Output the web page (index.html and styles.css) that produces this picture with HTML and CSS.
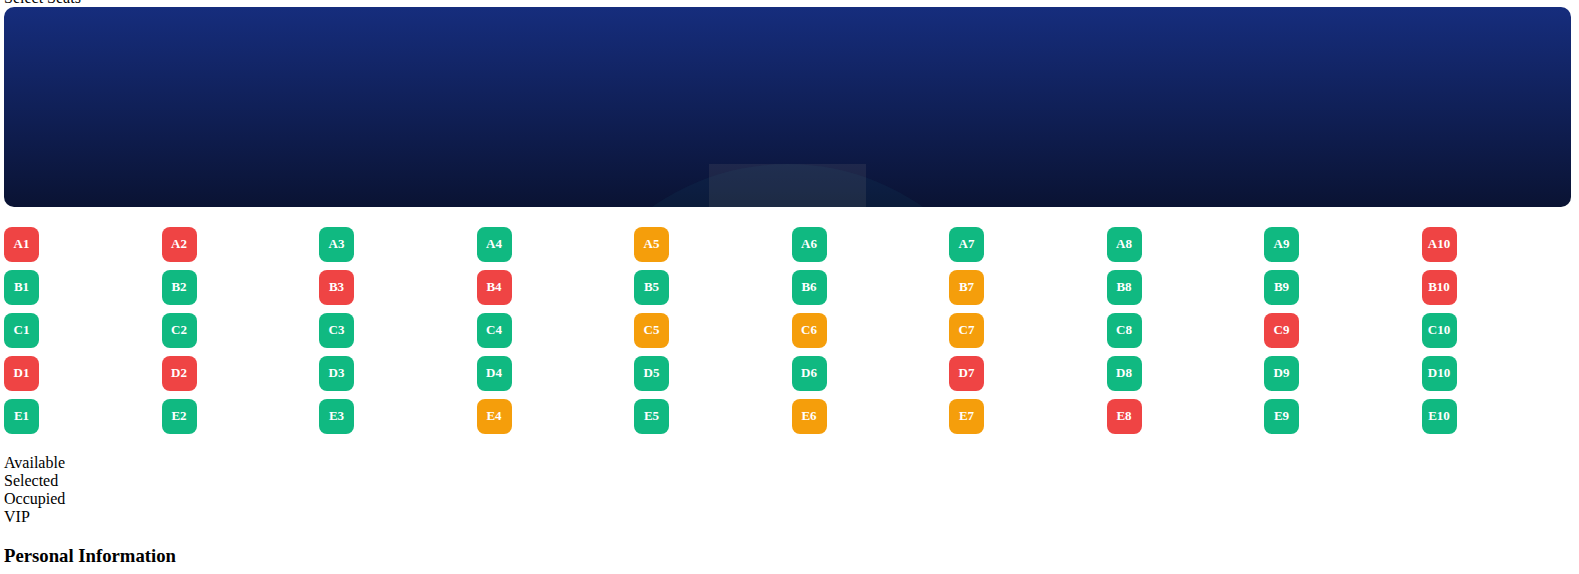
FILE: index.html
```html
<!DOCTYPE html>
<html lang="en">
<head>
<meta charset="utf-8">
<title>Select Seats</title>
<link rel="stylesheet" href="styles.css">
</head>
<body>
<main class="booking">
  <div class="step-title">Select Seats</div>
  <svg class="stage" viewBox="0 0 1567 200" preserveAspectRatio="xMidYMax slice" aria-hidden="true">
    <circle class="stage-glow" cx="783.5" cy="392" r="235"/>
    <rect class="stage-screen" x="705" y="157" width="157" height="43"/>
  </svg>
  <div class="seats" id="seats"></div>
  <ul class="legend">
    <li>Available</li>
    <li>Selected</li>
    <li>Occupied</li>
    <li>VIP</li>
  </ul>
  <h3 class="section-title">Personal Information</h3>
</main>
<script src="seats.js"></script>
</body>
</html>
```

FILE: styles.css
```css
body {
  margin: 0;
  overflow: hidden;
  background: #fff;
  color: #000;
  font-family: "Liberation Serif", "Times New Roman", serif;
  font-size: 16px;
  line-height: 18px;
}

.booking {
  margin: -11px 8px 0 4px;
}

.stage {
  display: block;
  width: 100%;
  height: 200px;
  margin-bottom: 20px;
  border-radius: 10px;
  background: linear-gradient(to bottom, #162d7d, #0a1333);
}

.stage-glow {
  fill: rgba(30, 110, 130, 0.1);
}

.stage-screen {
  fill: rgba(200, 180, 160, 0.1);
}

.seats {
  display: grid;
  grid-template-columns: repeat(10, 1fr);
  gap: 8px;
  margin-bottom: 20px;
}

.seat {
  width: 35px;
  height: 35px;
  padding: 0 0 2px;
  border: 0;
  border-radius: 8px;
  background: #10b981;
  color: #fff;
  font-family: inherit;
  font-size: 13px;
  font-weight: bold;
  cursor: pointer;
}

.seat-occupied {
  background: #ef4444;
  cursor: not-allowed;
}

.seat-vip {
  background: #f59e0b;
}

.legend {
  margin: 0;
  padding: 0;
  list-style: none;
}

.section-title {
  margin: 20px 0;
  line-height: 20px;
}
```

FILE: seats.js
```js
// One letter per seat: o = occupied, v = VIP, a = available.
const rows = {
  A: "ooaavaaaao",
  B: "aaooaavaao",
  C: "aaaavvvaoa",
  D: "ooaaaaoaaa",
  E: "aaavavvoaa"
};
const kinds = { o: "seat seat-occupied", v: "seat seat-vip", a: "seat" };
const grid = document.getElementById("seats");

for (const [row, states] of Object.entries(rows)) {
  [...states].forEach((state, i) => {
    const seat = document.createElement("button");
    seat.type = "button";
    seat.className = kinds[state];
    seat.textContent = row + (i + 1);
    grid.append(seat);
  });
}
```
